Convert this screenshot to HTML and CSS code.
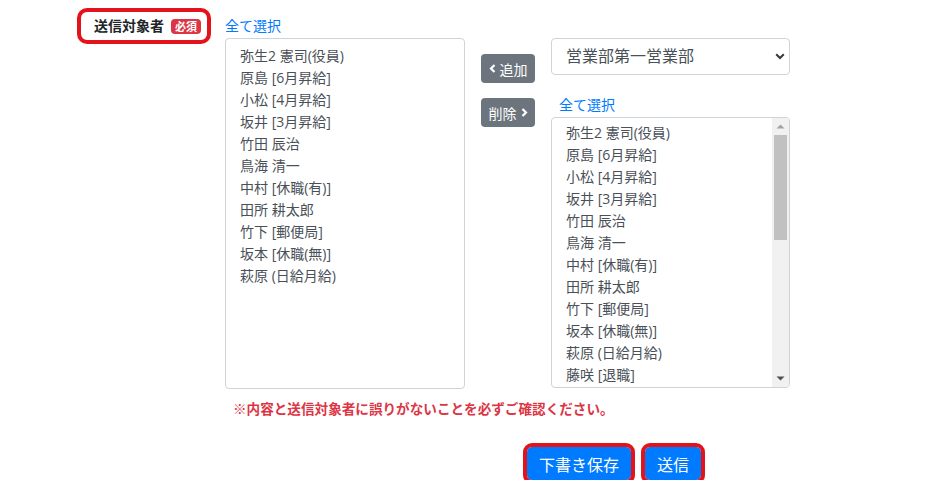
FILE: index.html
```html
<!DOCTYPE html>
<html lang="ja">
<head>
<meta charset="utf-8">
<title>送信対象者</title>
<link rel="stylesheet" href="styles.css">
</head>
<body>
<div class="page">
  <div class="row">
    <div class="label-cell">
      <div class="label-box">
        <span class="label-text">送信対象者</span>
        <span class="badge">必須</span>
      </div>
    </div>
    <div class="left-col">
      <a class="select-all" href="#">全て選択</a>
      <div class="listbox left-list">
        <div class="list-inner">
          <div class="opt">弥生2 憲司(役員)</div>
          <div class="opt">原島 [6月昇給]</div>
          <div class="opt">小松 [4月昇給]</div>
          <div class="opt">坂井 [3月昇給]</div>
          <div class="opt">竹田 辰治</div>
          <div class="opt">鳥海 清一</div>
          <div class="opt">中村 [休職(有)]</div>
          <div class="opt">田所 耕太郎</div>
          <div class="opt">竹下 [郵便局]</div>
          <div class="opt">坂本 [休職(無)]</div>
          <div class="opt">萩原 (日給月給)</div>
        </div>
      </div>
    </div>
    <div class="btn-col">
      <button class="btn-gray">
        <svg class="chev" width="7" height="9" viewBox="0 0 7 9"><path d="M5.5 1 L2 4.5 L5.5 8" fill="none" stroke="#fff" stroke-width="2.2"/></svg>
        追加
      </button>
      <button class="btn-gray">
        削除
        <svg class="chev" width="7" height="9" viewBox="0 0 7 9"><path d="M1.5 1 L5 4.5 L1.5 8" fill="none" stroke="#fff" stroke-width="2.2"/></svg>
      </button>
    </div>
    <div class="right-col">
      <div class="select-wrap">
        <div class="select-box">営業部第一営業部</div>
        <svg class="select-chev" width="10" height="7" viewBox="0 0 10 7"><path d="M1.2 1.2 L5 5 L8.8 1.2" fill="none" stroke="#343a40" stroke-width="2"/></svg>
      </div>
      <a class="select-all indent" href="#">全て選択</a>
      <div class="listbox right-list">
        <div class="list-inner scroll-inner">
          <div class="opt">弥生2 憲司(役員)</div>
          <div class="opt">原島 [6月昇給]</div>
          <div class="opt">小松 [4月昇給]</div>
          <div class="opt">坂井 [3月昇給]</div>
          <div class="opt">竹田 辰治</div>
          <div class="opt">鳥海 清一</div>
          <div class="opt">中村 [休職(有)]</div>
          <div class="opt">田所 耕太郎</div>
          <div class="opt">竹下 [郵便局]</div>
          <div class="opt">坂本 [休職(無)]</div>
          <div class="opt">萩原 (日給月給)</div>
          <div class="opt">藤咲 [退職]</div>
        </div>
        <div class="scrollbar">
          <div class="sb-btn">
            <svg width="9" height="5" viewBox="0 0 9 5"><path d="M0.5 4.5 L4.5 0.5 L8.5 4.5 Z" fill="#a3a3a3"/></svg>
          </div>
          <div class="sb-track"><div class="sb-thumb"></div></div>
          <div class="sb-btn">
            <svg width="9" height="5" viewBox="0 0 9 5"><path d="M0.5 0.5 L4.5 4.5 L8.5 0.5 Z" fill="#505050"/></svg>
          </div>
        </div>
      </div>
    </div>
  </div>
  <p class="notice">※内容と送信対象者に誤りがないことを必ずご確認ください。</p>
  <div class="actions">
    <button class="btn-blue">下書き保存</button>
    <button class="btn-blue">送信</button>
  </div>
</div>
</body>
</html>
```
FILE: styles.css
```css
* { box-sizing: border-box; }
html, body { margin: 0; padding: 0; background: #fff; }
body {
  font-family: "Open Sans", "Noto Sans CJK JP", "Noto Sans", sans-serif;
  font-size: 14px;
  color: #212529;
}
.page { padding: 8px 0 0 77px; }
.row { display: flex; align-items: flex-start; }
.label-cell { width: 148px; flex: none; }
.label-box {
  width: 134px;
  height: 36px;
  border: 4px solid #e3131c;
  border-radius: 10px;
  display: flex;
  align-items: center;
  padding-left: 13px;
  gap: 7px;
}
.label-text { font-weight: 700; font-size: 14px; color: #212529; line-height: 1; }
.badge {
  background: #dc3545;
  color: #fff;
  font-size: 11px;
  font-weight: 700;
  line-height: 1;
  padding: 0 4px;
  border-radius: 4px;
  height: 15px;
  display: inline-flex;
  align-items: center;
}
.left-col { width: 240px; flex: none; display: flex; flex-direction: column; margin-top: 8px; }
.select-all {
  color: #007bff;
  text-decoration: none;
  font-size: 14px;
  line-height: 20px;
  height: 22px;
  display: block;
}
.select-all.indent { padding-left: 8px; height: 22px; margin-top: 20px; line-height: 20px; }
.listbox {
  border: 1px solid #ced4da;
  border-radius: 4px;
  color: #495057;
  background: #fff;
  display: flex;
  overflow: hidden;
}
.list-inner { flex: 1; padding: 6px 0 0 14px; overflow: hidden; }
.scroll-inner { padding-top: 4px; }
.opt { line-height: 22px; height: 22px; white-space: nowrap; font-size: 14px; }
.left-list { height: 351px; }
.right-list { height: 271px; }
.scrollbar {
  width: 17px;
  flex: none;
  background: #f1f1f1;
  display: flex;
  flex-direction: column;
}
.sb-btn {
  height: 17px;
  display: flex;
  align-items: center;
  justify-content: center;
  flex: none;
}
.sb-track { flex: 1; padding: 0 2px; }
.sb-thumb { height: 105px; background: #c1c1c1; }
.btn-col {
  width: 54px;
  margin-left: 16px;
  margin-top: 46px;
  display: flex;
  flex-direction: column;
  gap: 15px;
  flex: none;
}
.btn-gray {
  background: #6c757d;
  border: none;
  border-radius: 4px;
  color: #fff;
  font-family: inherit;
  font-size: 14px;
  height: 29px;
  width: 54px;
  padding: 0;
  display: flex;
  align-items: center;
  justify-content: center;
  gap: 4px;
}
.right-col { width: 239px; margin-left: 16px; flex: none; display: flex; flex-direction: column; margin-top: 30px; }
.select-wrap { position: relative; }
.select-box {
  height: 37px;
  border: 1px solid #ced4da;
  border-radius: 4px;
  font-size: 16px;
  color: #495057;
  line-height: 35px;
  padding-left: 14px;
}
.select-chev { position: absolute; right: 5px; top: 15px; }
.notice {
  margin: 10px 0 0 156px;
  color: #dc3545;
  font-weight: 700;
  font-size: 13.6px;
  line-height: 20px;
}
.actions {
  display: flex;
  gap: 14px;
  margin: 28px 0 0 450px;
}
.btn-blue {
  background: #007bff;
  color: #fff;
  border: none;
  border-radius: 5px;
  font-family: inherit;
  font-size: 16px;
  height: 33px;
  padding: 0 12px;
  outline: 4px solid #e3131c;
  outline-offset: 0;
}
```
